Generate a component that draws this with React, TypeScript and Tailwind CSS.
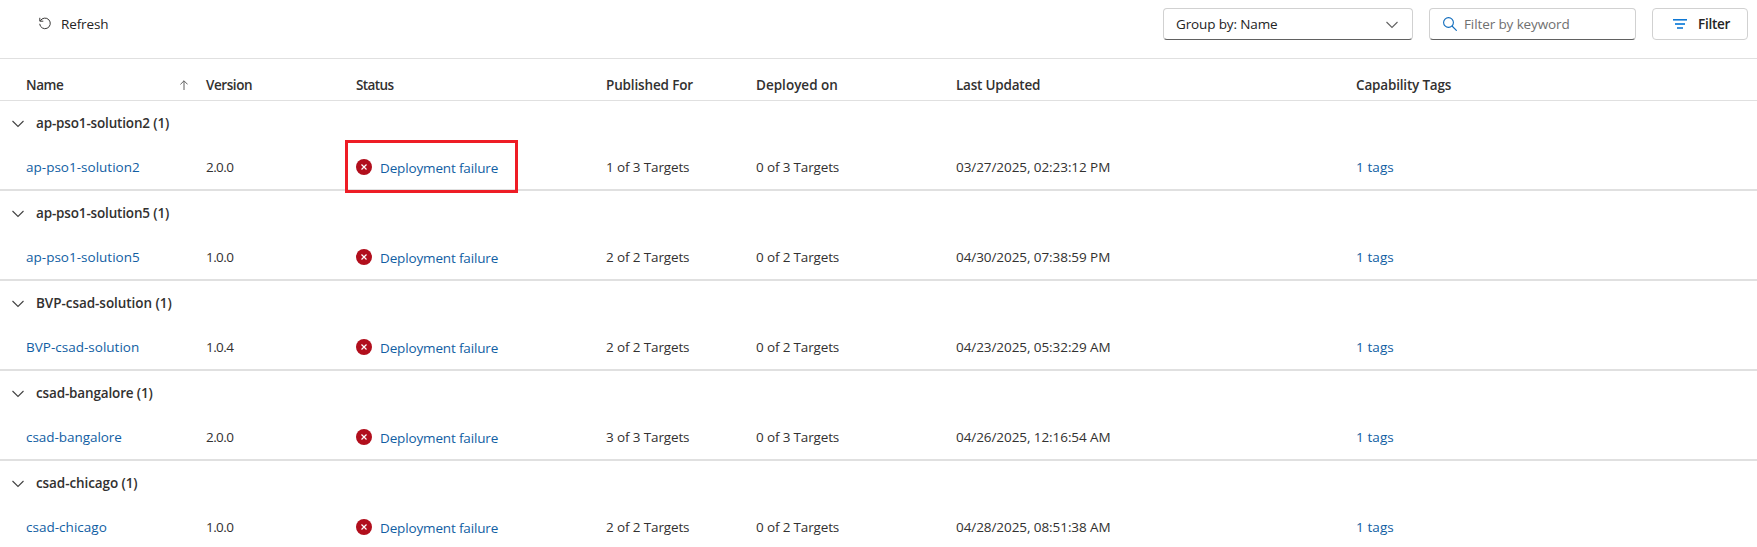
import type { ReactNode } from "react";

type Solution = {
  name: string;
  groupTracking: string;
  nameTracking: string;
  version: string;
  published: string;
  deployed: string;
  updated: string;
  highlighted?: boolean;
};

const solutions: Solution[] = [
  { name: "ap-pso1-solution2", groupTracking: "tracking-[-0.16px]", nameTracking: "tracking-[0.01px]", version: "2.0.0", published: "1 of 3 Targets", deployed: "0 of 3 Targets", updated: "03/27/2025, 02:23:12 PM", highlighted: true },
  { name: "ap-pso1-solution5", groupTracking: "tracking-[-0.16px]", nameTracking: "tracking-[0.01px]", version: "1.0.0", published: "2 of 2 Targets", deployed: "0 of 2 Targets", updated: "04/30/2025, 07:38:59 PM" },
  { name: "BVP-csad-solution", groupTracking: "tracking-[-0.05px]", nameTracking: "tracking-[0.01px]", version: "1.0.4", published: "2 of 2 Targets", deployed: "0 of 2 Targets", updated: "04/23/2025, 05:32:29 AM" },
  { name: "csad-bangalore", groupTracking: "tracking-[-0.15px]", nameTracking: "tracking-[-0.05px]", version: "2.0.0", published: "3 of 3 Targets", deployed: "0 of 3 Targets", updated: "04/26/2025, 12:16:54 AM" },
  { name: "csad-chicago", groupTracking: "tracking-[-0.09px]", nameTracking: "tracking-[0.02px]", version: "1.0.0", published: "2 of 2 Targets", deployed: "0 of 2 Targets", updated: "04/28/2025, 08:51:38 AM" },
];

const columns = "grid grid-cols-[180px_150px_250px_150px_200px_400px_1fr] pl-[26px]";

function Chevron({ className = "" }: { className?: string }) {
  return (
    <svg className={className} width="12" height="8" viewBox="0 0 12 8" fill="none" stroke="currentColor" strokeWidth="1.1">
      <path d="M0.5 1 6 6.5 11.5 1" />
    </svg>
  );
}

function RefreshIcon() {
  return (
    <svg width="12" height="13" viewBox="0 0 12 13" fill="none" stroke="#3b3a39" strokeWidth="1">
      <path d="M1.3 3.9A5.3 5.3 0 1 1 .7 6.8" />
      <path d="M.8.8v3.4h3.5" />
    </svg>
  );
}

function SearchIcon() {
  return (
    <svg width="14" height="14" viewBox="0 0 14 14" fill="none" stroke="#0f6cbd" strokeWidth="1.1">
      <circle cx="5.5" cy="5.5" r="4.9" />
      <path d="m9 9 4.7 4.7" />
    </svg>
  );
}

function FilterIcon() {
  return (
    <svg width="14" height="10" viewBox="0 0 14 10">
      <path fill="#0f78d4" d="M0 0h14v1.6H0z" />
      <path fill="#3390df" d="M2 4h10v2H2z" />
      <path fill="#0f78d4" d="M4 8.2h6v1.6H4z" />
    </svg>
  );
}

function ErrorIcon() {
  return (
    <svg width="16" height="16" viewBox="0 0 16 16">
      <circle cx="8" cy="8" r="8" fill="#b10e1c" />
      <path d="m5.5 5.5 5 5m0-5-5 5" stroke="#fff" strokeWidth="1.2" />
    </svg>
  );
}

function Link({ children, className = "" }: { children: ReactNode; className?: string }) {
  return <a className={`cursor-pointer text-[#115ea3] ${className}`}>{children}</a>;
}

function Toolbar() {
  return (
    <div className="flex h-[59px] shrink-0 items-start border-b border-[#e0e0e0] pt-2 pr-[9px] pl-[39px]">
      <button className="flex h-8 items-center pb-px text-[#242424]">
        <RefreshIcon />
        <span className="ml-[10px] tracking-[-0.11px]">Refresh</span>
      </button>
      <div className="ml-auto flex gap-4">
        <div className="flex h-8 w-[250px] items-center justify-between rounded-[4px] border border-[#d1d1d1] border-b-[#616161] pr-[14px] pl-3">
          <span className="mb-px tracking-[-0.13px] text-[#242424]">Group by: Name</span>
          <Chevron className="mt-px text-[#616161]" />
        </div>
        <div className="flex h-8 w-[207px] items-center rounded-[4px] border border-[#d1d1d1] border-b-[#616161] pl-[13px]">
          <SearchIcon />
          <span className="mb-px ml-[7px] tracking-[-0.11px] text-[#707070]">Filter by keyword</span>
        </div>
        <button className="flex h-8 w-[96px] items-center rounded-[4px] border border-[#d1d1d1] pl-5 text-[#242424]">
          <FilterIcon />
          <span className="mb-px ml-[11px] font-semibold tracking-[-0.28px]">Filter</span>
        </button>
      </div>
    </div>
  );
}

function HeaderRow() {
  return (
    <div className={`${columns} h-[42px] shrink-0 border-b border-[#e0e0e0] pt-4 font-semibold`}>
      <div className="flex justify-between pr-[18px]">
        <span className="tracking-[-0.43px]">Name</span>
        <svg className="mt-[5px]" width="8" height="10" viewBox="0 0 8 10" fill="none" stroke="#616161">
          <path d="M4 10V.8M.4 4.4 4 .8l3.6 3.6" />
        </svg>
      </div>
      <span className="tracking-[-0.43px]">Version</span>
      <span className="tracking-[-0.6px]">Status</span>
      <span className="tracking-[-0.15px]">Published For</span>
      <span className="tracking-[0.01px]">Deployed on</span>
      <span className="tracking-[-0.22px]">Last Updated</span>
      <span className="tracking-[-0.18px]">Capability Tags</span>
    </div>
  );
}

function SolutionGroup({ item }: { item: Solution }) {
  return (
    <section className="flex h-[90px] shrink-0 flex-col gap-6 border-b-2 border-[#e0e0e0] pt-3">
      <div className="flex items-center pl-3 font-semibold">
        <Chevron className="mt-0.5 text-[#424242]" />
        <span className={`ml-3 ${item.groupTracking}`}>{item.name} (1)</span>
      </div>
      <div className={columns}>
        <Link className={item.nameTracking}>{item.name}</Link>
        <span className="tracking-[-0.58px]">{item.version}</span>
        <div className="relative flex h-5">
          <span className="mt-0.5"><ErrorIcon /></span>
          <Link className="mt-px ml-2 tracking-[-0.15px]">Deployment failure</Link>
          {item.highlighted && (
            <div className="absolute -top-[17px] -left-[11px] h-[53px] w-[173px] border-[3px] border-[#ee1c25]" />
          )}
        </div>
        <span className="tracking-[-0.13px]">{item.published}</span>
        <span className="tracking-[-0.15px]">{item.deployed}</span>
        <span className="tracking-[-0.07px]">{item.updated}</span>
        <Link className="tracking-[0.1px]">1 tags</Link>
      </div>
    </section>
  );
}

export default function App() {
  return (
    <main className="flex h-[547px] w-full flex-col overflow-hidden bg-white font-['Open_Sans','Noto_Sans',sans-serif] text-[13.5px] leading-5 whitespace-nowrap text-[#323130]">
      <Toolbar />
      <HeaderRow />
      {solutions.map((item) => (
        <SolutionGroup key={item.name} item={item} />
      ))}
    </main>
  );
}
